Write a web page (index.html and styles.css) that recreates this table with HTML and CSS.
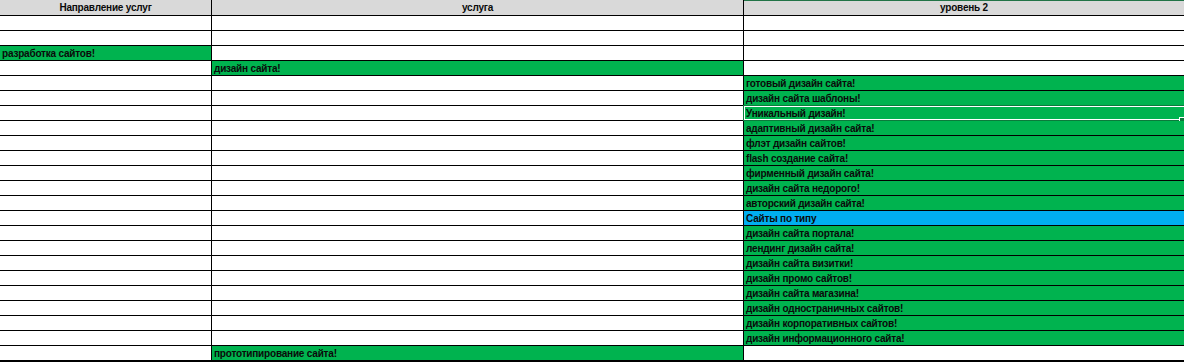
FILE: index.html
```html
<!DOCTYPE html>
<html lang="ru">
<head>
<meta charset="utf-8">
<link rel="stylesheet" href="styles.css">
</head>
<body>
<div class="sheet">
  <div class="grid">
    <div class="cell head">Направление услуг</div>
    <div class="cell head">услуга</div>
    <div class="cell head head-sel">уровень 2</div>

    <div class="cell"></div><div class="cell"></div><div class="cell"></div>
    <div class="cell"></div><div class="cell"></div><div class="cell"></div>
    <div class="cell g">разработка сайтов!</div><div class="cell"></div><div class="cell"></div>
    <div class="cell"></div><div class="cell g">дизайн сайта!</div><div class="cell"></div>
    <div class="cell"></div><div class="cell"></div><div class="cell g">готовый дизайн сайта!</div>
    <div class="cell"></div><div class="cell"></div><div class="cell g">дизайн сайта шаблоны!</div>
    <div class="cell"></div><div class="cell"></div><div class="cell g sel">Уникальный дизайн!<span class="handle"></span></div>
    <div class="cell"></div><div class="cell"></div><div class="cell g">адаптивный дизайн сайта!</div>
    <div class="cell"></div><div class="cell"></div><div class="cell g">флэт дизайн сайтов!</div>
    <div class="cell"></div><div class="cell"></div><div class="cell g">flash создание сайта!</div>
    <div class="cell"></div><div class="cell"></div><div class="cell g">фирменный дизайн сайта!</div>
    <div class="cell"></div><div class="cell"></div><div class="cell g">дизайн сайта недорого!</div>
    <div class="cell"></div><div class="cell"></div><div class="cell g">авторский дизайн сайта!</div>
    <div class="cell"></div><div class="cell"></div><div class="cell b">Сайты по типу</div>
    <div class="cell"></div><div class="cell"></div><div class="cell g">дизайн сайта портала!</div>
    <div class="cell"></div><div class="cell"></div><div class="cell g">лендинг дизайн сайта!</div>
    <div class="cell"></div><div class="cell"></div><div class="cell g">дизайн сайта визитки!</div>
    <div class="cell"></div><div class="cell"></div><div class="cell g">дизайн промо сайтов!</div>
    <div class="cell"></div><div class="cell"></div><div class="cell g">дизайн сайта магазина!</div>
    <div class="cell"></div><div class="cell"></div><div class="cell g">дизайн одностраничных сайтов!</div>
    <div class="cell"></div><div class="cell"></div><div class="cell g">дизайн корпоративных сайтов!</div>
    <div class="cell"></div><div class="cell"></div><div class="cell g">дизайн информационного сайта!</div>
    <div class="cell"></div><div class="cell g">прототипирование сайта!</div><div class="cell"></div>
  </div>
</div>
</body>
</html>
```

FILE: styles.css
```css
html, body {
  margin: 0;
  padding: 0;
  background: #ffffff;
}
.sheet {
  width: 1184px;
  height: 362px;
  overflow: hidden;
}
.grid {
  display: grid;
  grid-template-columns: 211px 531px 460px;
  grid-template-rows: 15px repeat(24, 14px);
  gap: 1px;
  background: #000000;
  width: 1204px;
  font-family: "Liberation Sans", Arial, sans-serif;
  font-weight: bold;
  font-size: 10px;
  letter-spacing: -0.2px;
  color: #0a0a0a;
}
.cell {
  background: #ffffff;
  line-height: 14px;
  padding: 1px 2px 0 2px;
  box-sizing: border-box;
  white-space: nowrap;
  overflow: hidden;
  position: relative;
}
.head {
  background: #d9d9d9;
  text-align: center;
  line-height: 15px;
  padding-top: 0;
}
.head-sel {
  box-shadow: inset 0 1px 0 #217346;
  padding-right: 22px;
}
.g {
  background: #00b34f;
}
.b {
  background: #00aef0;
}
.sel {
  overflow: visible;
  box-shadow: inset 0 0 0 1px #ffffff;
  outline: 1px solid #0b7a3b;
}
.handle {
  position: absolute;
  right: 19px;
  bottom: -3px;
  width: 4px;
  height: 4px;
  background: #0b7a3b;
  border: 1px solid #ffffff;
}
```
